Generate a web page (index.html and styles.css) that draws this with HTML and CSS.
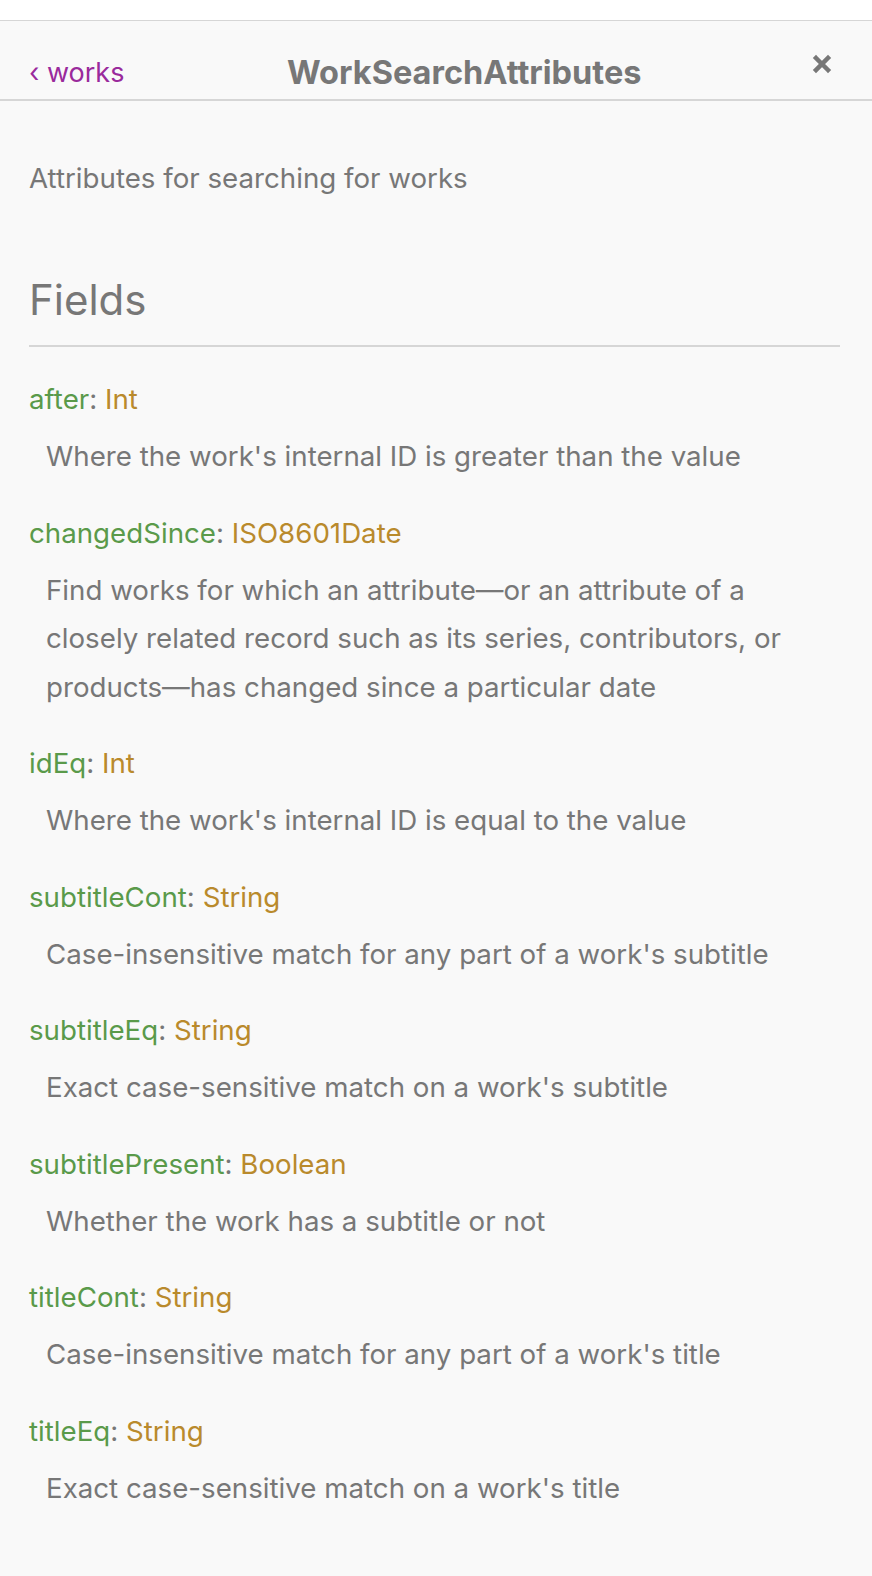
FILE: index.html
```html
<!DOCTYPE html>
<html lang="en">
<head>
  <meta charset="UTF-8">
  <meta name="viewport" content="width=device-width, initial-scale=1.0">
  <title>WorkSearchAttributes</title>
  <link rel="stylesheet" href="styles.css">
</head>
<body>
  <div class="top-strip"></div>

  <div class="doc-explorer">
    <div class="doc-title-bar">
      <a class="doc-back" href="#">&lsaquo; works</a>
      <div class="doc-title">WorkSearchAttributes</div>
      <button class="doc-close" aria-label="Close">
        <svg width="20" height="20" viewBox="0 0 20 20">
          <path d="M4 4 L16 16 M16 4 L4 16" stroke="#777" stroke-width="4.5" stroke-linecap="square" fill="none"/>
        </svg>
      </button>
    </div>

    <div class="doc-contents">
      <p class="type-description">Attributes for searching for works</p>

      <div class="doc-category">
        <h2 class="category-title">Fields</h2>

        <div class="field">
          <div class="field-sig"><span class="field-name">after</span>: <span class="field-type">Int</span></div>
          <div class="field-desc">Where the work's internal ID is greater than the value</div>
        </div>

        <div class="field">
          <div class="field-sig"><span class="field-name">changedSince</span>: <span class="field-type">ISO8601Date</span></div>
          <div class="field-desc">Find works for which an attribute&mdash;or an attribute of a closely related record such as its series, contributors, or products&mdash;has changed since a particular date</div>
        </div>

        <div class="field">
          <div class="field-sig"><span class="field-name">idEq</span>: <span class="field-type">Int</span></div>
          <div class="field-desc">Where the work's internal ID is equal to the value</div>
        </div>

        <div class="field">
          <div class="field-sig"><span class="field-name">subtitleCont</span>: <span class="field-type">String</span></div>
          <div class="field-desc">Case-insensitive match for any part of a work's subtitle</div>
        </div>

        <div class="field">
          <div class="field-sig"><span class="field-name">subtitleEq</span>: <span class="field-type">String</span></div>
          <div class="field-desc">Exact case-sensitive match on a work's subtitle</div>
        </div>

        <div class="field">
          <div class="field-sig"><span class="field-name">subtitlePresent</span>: <span class="field-type">Boolean</span></div>
          <div class="field-desc">Whether the work has a subtitle or not</div>
        </div>

        <div class="field">
          <div class="field-sig"><span class="field-name">titleCont</span>: <span class="field-type">String</span></div>
          <div class="field-desc">Case-insensitive match for any part of a work's title</div>
        </div>

        <div class="field">
          <div class="field-sig"><span class="field-name">titleEq</span>: <span class="field-type">String</span></div>
          <div class="field-desc">Exact case-sensitive match on a work's title</div>
        </div>
      </div>
    </div>
  </div>
</body>
</html>
```

FILE: styles.css
```css
body {
  font-family: Inter, 'Helvetica Neue', sans-serif;
  color: #777;
  margin: 0;
  padding: 0;
  background-color: #f9f9f9;
}

.top-strip {
  height: 20px;
  background-color: white;
  border-bottom: 1px solid #d6d6d6;
}

.doc-title-bar {
  display: flex;
  align-items: center;
  height: 80px;
  padding: 24px 40px 0 29px;
  box-sizing: border-box;
  border-bottom: 2px solid #d6d6d6;
}

.doc-back {
  color: #9a2a9c;
  text-decoration: none;
  font-size: 27px;
}

.doc-title {
  flex-grow: 1;
  text-align: center;
  font-size: 32.5px;
  font-weight: 700;
  color: #777;
  padding-right: 8px;
}

.doc-close {
  border: none;
  background: none;
  padding: 0;
  align-self: flex-start;
  margin-top: 9px;
  width: 20px;
  height: 20px;
  cursor: pointer;
}

.doc-contents {
  padding: 0 32px 40px 29px;
}

.type-description {
  font-size: 27.7px;
  margin: 60px 0 0;
  line-height: 34px;
}

.doc-category {
  margin-top: 78px;
}

.category-title {
  font-size: 42px;
  font-weight: 400;
  margin: 0;
  padding-bottom: 18px;
  border-bottom: 2px solid #d6d6d6;
  line-height: 54px;
}

.doc-category .field:first-of-type {
  margin-top: 35px;
}

.field {
  margin-bottom: 35px;
}

.field-sig {
  font-size: 27.7px;
  line-height: 34px;
}

.field-name {
  color: #5a9a4a;
}

.field-type {
  color: #b98a2c;
}

.field-desc {
  font-size: 27.7px;
  line-height: 48.5px;
  padding: 16px 0 0 17px;
}
```
